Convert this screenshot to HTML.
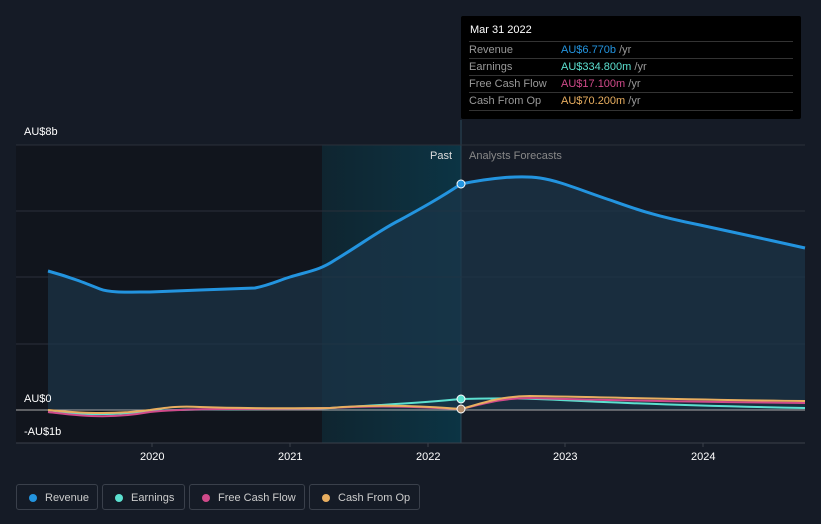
<!DOCTYPE html><html><head><style>
body{margin:0;width:821px;height:524px;background:#151b26;font-family:"Liberation Sans",sans-serif;overflow:hidden;position:relative}
.t{position:absolute;font-size:11px;color:#fff}
.tip{position:absolute;left:461px;top:16px;width:340px;height:103px;background:#000;border-radius:2px}
.tip .r{position:absolute;left:8px;width:324px;height:17px;border-top:1px solid #333;font-size:11px;color:#999;line-height:17px}
.tip .v{position:absolute;left:92px}
.leg{position:absolute;top:484px;height:26px;border:1px solid #3a404b;border-radius:3px;font-size:11px;color:#ccc;line-height:26px;box-sizing:border-box}
.leg i{position:absolute;left:12px;top:9px;width:8px;height:8px;border-radius:50%}
</style></head><body>
<svg width="821" height="524" style="position:absolute;left:0;top:0">
<defs><linearGradient id="hl" x1="0" x2="1"><stop offset="0" stop-color="#0f2530"/><stop offset="1" stop-color="#0c3444"/></linearGradient></defs>
<rect x="16" y="145" width="306" height="298" fill="#11151d"/>
<rect x="322" y="145" width="139" height="298" fill="url(#hl)"/>
<line x1="461" y1="120" x2="461" y2="443" stroke="#2a4a5a"/>
<g stroke="#2a303a"><line x1="16" y1="145" x2="805" y2="145"/><line x1="16" y1="211" x2="805" y2="211"/><line x1="16" y1="277" x2="805" y2="277"/><line x1="16" y1="344" x2="805" y2="344"/></g>
<line x1="16" y1="443" x2="805" y2="443" stroke="#3a404b"/>
<path d="M48,271 C70,277 85,283 100,289 C110,293 130,292 150,292 L200,290 L255,288 C270,285 280,280 290,277 C310,271 320,270 335,260 C360,245 380,230 400,220 C420,209 440,198 461,184 C490,178 520,175 540,178 C560,181 580,190 610,200 C630,207 650,215 700,225 C740,234 770,240 805,248 L805,410 L48,410Z" fill="#1b3548" fill-opacity="0.7"/>
<path d="M48,271 C70,277 85,283 100,289 C110,293 130,292 150,292 L200,290 L255,288 C270,285 280,280 290,277 C310,271 320,270 335,260 C360,245 380,230 400,220 C420,209 440,198 461,184 C490,178 520,175 540,178 C560,181 580,190 610,200 C630,207 650,215 700,225 C740,234 770,240 805,248" fill="none" stroke="#2394df" stroke-width="3"/>
<line x1="16" y1="410" x2="805" y2="410" stroke="#aaa"/>
<path d="M48,412 C80,414 110,416 150,411 C200,408 280,410 330,408 C380,405 420,403 461,399 C500,398 520,398 560,400 C620,403 700,406 805,408" fill="none" stroke="#5ce0d0" stroke-width="2"/>
<path d="M48,412 C80,416 110,419 150,412 C200,407 280,410 330,408 C380,405 420,407 461,409 C480,405 500,398 530,398 C600,400 700,402 805,403" fill="none" stroke="#d04a8a" stroke-width="2"/>
<path d="M48,410 C80,413 110,415 150,410 C170,407 180,406 200,407 C260,409 300,408 330,408 C380,404 420,406 461,409 C480,404 500,396 530,396 C600,397 700,400 805,401" fill="none" stroke="#e8ae60" stroke-width="2"/>
<circle cx="461" cy="184" r="4" fill="#2394df" stroke="#fff" stroke-width="1"/>
<circle cx="461" cy="399" r="4" fill="#5ce0d0" stroke="#fff" stroke-width="1"/>
<circle cx="461" cy="409" r="4" fill="#b08a6a" stroke="#fff" stroke-width="1"/>
<g stroke="#3a404b"><line x1="152" y1="443" x2="152" y2="447"/><line x1="290" y1="443" x2="290" y2="447"/><line x1="428" y1="443" x2="428" y2="447"/><line x1="565" y1="443" x2="565" y2="447"/><line x1="703" y1="443" x2="703" y2="447"/></g>
</svg>
<div class="t" style="left:24px;top:126px">AU$8b</div>
<div class="t" style="left:24px;top:393px">AU$0</div>
<div class="t" style="left:24px;top:426px">-AU$1b</div>
<div class="t" style="left:430px;top:150px;color:#ddd">Past</div>
<div class="t" style="left:469px;top:150px;color:#888">Analysts Forecasts</div>
<div class="t" style="left:140px;top:451px">2020</div>
<div class="t" style="left:278px;top:451px">2021</div>
<div class="t" style="left:416px;top:451px">2022</div>
<div class="t" style="left:553px;top:451px">2023</div>
<div class="t" style="left:691px;top:451px">2024</div>
<div class="tip">
<div style="position:absolute;left:9px;top:8px;color:#fff;font-size:11px">Mar 31 2022</div>
<div class="r" style="top:25px">Revenue<span class="v" style="color:#2394df">AU$6.770b <span style="color:#999">/yr</span></span></div>
<div class="r" style="top:42px">Earnings<span class="v" style="color:#5ce0d0">AU$334.800m <span style="color:#999">/yr</span></span></div>
<div class="r" style="top:59px">Free Cash Flow<span class="v" style="color:#d04a8a">AU$17.100m <span style="color:#999">/yr</span></span></div>
<div class="r" style="top:76px">Cash From Op<span class="v" style="color:#e8ae60">AU$70.200m <span style="color:#999">/yr</span></span></div>
<div style="position:absolute;left:8px;top:94px;width:324px;border-top:1px solid #333"></div>
</div>
<div class="leg" style="left:16px;width:82px;padding-left:28px"><i style="background:#2394df"></i>Revenue</div>
<div class="leg" style="left:102px;width:83px;padding-left:28px"><i style="background:#5ce0d0"></i>Earnings</div>
<div class="leg" style="left:189px;width:116px;padding-left:28px"><i style="background:#d04a8a"></i>Free Cash Flow</div>
<div class="leg" style="left:309px;width:111px;padding-left:28px"><i style="background:#e8ae60"></i>Cash From Op</div>
</body></html>
